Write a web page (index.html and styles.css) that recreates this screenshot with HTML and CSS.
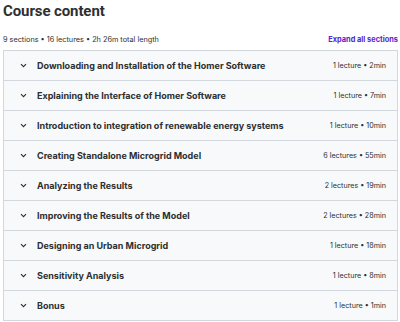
FILE: index.html
```html
<!DOCTYPE html>
<html lang="en">
<head>
  <meta charset="UTF-8">
  <title>Course content</title>
  <link rel="stylesheet" href="styles.css">
</head>
<body>
  <h2 class="title">Course content</h2>

  <div class="summary">
    <span>9 sections • 16 lectures • 2h 26m total length</span>
    <a class="expand">Expand all sections</a>
  </div>

  <!-- Sections -->
  <div class="sections">
    <div class="row"><span class="chev"><svg width="7" height="5" viewBox="0 0 7 5"><path d="M1 1.2l2.5 2.5 2.5-2.5" fill="none" stroke="#2d2f31" stroke-width="1.1"/></svg></span><span class="name">Downloading and Installation of the Homer Software</span><span class="meta">1 lecture • 2min</span></div>
    <div class="row"><span class="chev"><svg width="7" height="5" viewBox="0 0 7 5"><path d="M1 1.2l2.5 2.5 2.5-2.5" fill="none" stroke="#2d2f31" stroke-width="1.1"/></svg></span><span class="name">Explaining the Interface of Homer Software</span><span class="meta">1 lecture • 7min</span></div>
    <div class="row"><span class="chev"><svg width="7" height="5" viewBox="0 0 7 5"><path d="M1 1.2l2.5 2.5 2.5-2.5" fill="none" stroke="#2d2f31" stroke-width="1.1"/></svg></span><span class="name">Introduction to integration of renewable energy systems</span><span class="meta">1 lecture • 10min</span></div>
    <div class="row"><span class="chev"><svg width="7" height="5" viewBox="0 0 7 5"><path d="M1 1.2l2.5 2.5 2.5-2.5" fill="none" stroke="#2d2f31" stroke-width="1.1"/></svg></span><span class="name">Creating Standalone Microgrid Model</span><span class="meta">6 lectures • 55min</span></div>
    <div class="row"><span class="chev"><svg width="7" height="5" viewBox="0 0 7 5"><path d="M1 1.2l2.5 2.5 2.5-2.5" fill="none" stroke="#2d2f31" stroke-width="1.1"/></svg></span><span class="name">Analyzing the Results</span><span class="meta">2 lectures • 19min</span></div>
    <div class="row"><span class="chev"><svg width="7" height="5" viewBox="0 0 7 5"><path d="M1 1.2l2.5 2.5 2.5-2.5" fill="none" stroke="#2d2f31" stroke-width="1.1"/></svg></span><span class="name">Improving the Results of the Model</span><span class="meta">2 lectures • 28min</span></div>
    <div class="row"><span class="chev"><svg width="7" height="5" viewBox="0 0 7 5"><path d="M1 1.2l2.5 2.5 2.5-2.5" fill="none" stroke="#2d2f31" stroke-width="1.1"/></svg></span><span class="name">Designing an Urban Microgrid</span><span class="meta">1 lecture • 18min</span></div>
    <div class="row"><span class="chev"><svg width="7" height="5" viewBox="0 0 7 5"><path d="M1 1.2l2.5 2.5 2.5-2.5" fill="none" stroke="#2d2f31" stroke-width="1.1"/></svg></span><span class="name">Sensitivity Analysis</span><span class="meta">1 lecture • 8min</span></div>
    <div class="row"><span class="chev"><svg width="7" height="5" viewBox="0 0 7 5"><path d="M1 1.2l2.5 2.5 2.5-2.5" fill="none" stroke="#2d2f31" stroke-width="1.1"/></svg></span><span class="name">Bonus</span><span class="meta">1 lecture • 1min</span></div>
  </div>
</body>
</html>
```

FILE: styles.css
```css
body {
  margin: 0;
  padding: 0 0 0 3px;
  width: 395px;
  font-family: Inter, "Noto Sans", sans-serif;
  color: #2d2f31;
  background: #fff;
  overflow: hidden;
}

.title {
  margin: 0;
  font-family: Roboto, sans-serif;
  font-size: 15px;
  line-height: 22px;
  font-weight: 700;
  letter-spacing: -0.1px;
}

.summary {
  display: flex;
  justify-content: space-between;
  align-items: center;
  margin-top: 10px;
  height: 14px;
  font-size: 7.3px;
  color: #2d2f31;
}

.expand {
  font-weight: 700;
  font-size: 7.4px;
  color: #5624d0;
}

.sections {
  margin-top: 4px;
  border: 1px solid #d1d7dc;
  border-bottom: none;
}

.row {
  display: flex;
  align-items: center;
  height: 29px;
  background: #f7f9fa;
  border-bottom: 1px solid #d1d7dc;
  padding: 0 11px 0 16px;
}

.chev {
  display: flex;
  width: 17px;
}

.name {
  flex: 1;
  font-size: 9px;
  font-weight: 700;
}

.meta {
  font-size: 7.2px;
}
```
